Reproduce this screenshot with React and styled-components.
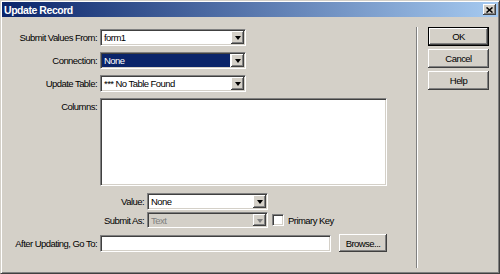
import React from "react";
import styled, { createGlobalStyle, css } from "styled-components";

const GlobalStyle = createGlobalStyle`
  html, body {
    margin: 0;
    padding: 0;
    width: 500px;
    height: 274px;
    overflow: hidden;
    background: #d4d0c8;
  }
  * {
    box-sizing: border-box;
  }
`;

const FONT = `"Liberation Sans", Arial, sans-serif`;

const sunken = css`
  border: 1px solid;
  border-color: #808080 #ffffff #ffffff #808080;
  box-shadow: inset 1px 1px #404040, inset -1px -1px #d4d0c8;
`;

const raised = css`
  box-shadow: inset -1px -1px #404040, inset 1px 1px #ffffff,
    inset -2px -2px #808080, inset 2px 2px #d4d0c8;
`;

const Window = styled.div`
  width: 500px;
  height: 274px;
  display: flex;
  flex-direction: column;
  background: #d4d0c8;
  border: 1px solid;
  border-color: #d4d0c8 #404040 #404040 #d4d0c8;
  box-shadow: inset 1px 1px #ffffff, inset -1px -1px #808080;
  padding: 1px;
  font-family: ${FONT};
  font-size: 9.5px;
  letter-spacing: -0.55px;
  color: #000;
`;

const TitleBar = styled.div`
  height: 15px;
  flex: none;
  display: flex;
  align-items: center;
  justify-content: space-between;
  padding: 0 2px 0 2px;
  background: linear-gradient(to right, #0a246a, #a6caf0);
`;

const Title = styled.span`
  color: #fff;
  font-weight: bold;
  font-size: 10.5px;
  letter-spacing: -0.45px;
`;

const CloseButton = styled.div`
  width: 13px;
  height: 11px;
  background: #d4d0c8;
  display: flex;
  align-items: center;
  justify-content: center;
  ${raised};
`;

const Body = styled.div`
  flex: 1;
  display: flex;
`;

const Form = styled.div`
  width: 414px;
  display: flex;
  flex-direction: column;
  padding-top: 12px;
`;

const Row = styled.div`
  display: flex;
  align-items: ${(p) => (p.$top ? "flex-start" : "center")};
  gap: 3px;
  margin-top: ${(p) => p.$mt || 0}px;
`;

const Label = styled.div`
  width: ${(p) => p.$w || 95}px;
  text-align: right;
  white-space: nowrap;
  flex: none;
  padding-top: ${(p) => (p.$top ? 3 : 0)}px;
`;

const Field = styled.div`
  ${sunken};
  width: ${(p) => p.$w}px;
  height: ${(p) => p.$h || 17}px;
  background: ${(p) => (p.$disabled ? "#d4d0c8" : "#fff")};
  display: flex;
  align-items: stretch;
  padding: 1px;
  flex: none;
`;

const FieldText = styled.div`
  flex: 1;
  display: flex;
  align-items: center;
  padding-left: 2px;
  white-space: nowrap;
  overflow: hidden;
  margin-right: 1px;
  background: ${(p) => (p.$selected ? "#0a246a" : "transparent")};
  color: ${(p) => (p.$selected ? "#fff" : p.$disabled ? "#808080" : "#000")};
`;

const DropButton = styled.div`
  width: 13px;
  flex: none;
  background: #d4d0c8;
  display: flex;
  align-items: center;
  justify-content: center;
  ${raised};
`;

const Arrow = styled.div`
  width: 0;
  height: 0;
  border-left: 3.5px solid transparent;
  border-right: 3.5px solid transparent;
  border-top: 4px solid ${(p) => (p.$disabled ? "#808080" : "#000")};
  margin-top: 1px;
`;

const ListBox = styled.div`
  ${sunken};
  width: 287px;
  height: 88px;
  background: #fff;
`;

const CheckBox = styled.div`
  ${sunken};
  width: 12px;
  height: 12px;
  background: #fff;
  margin-left: 1px;
  flex: none;
`;

const CheckLabel = styled.span`
  margin-left: 1px;
`;

const Separator = styled.div`
  width: 2px;
  flex: none;
  border-left: 1px solid #808080;
  border-right: 1px solid #ffffff;
  margin: 10px 0 4px;
`;

const ButtonColumn = styled.div`
  display: flex;
  flex-direction: column;
  gap: 3px;
  padding: 10px 0 0 10px;
`;

const Button = styled.div`
  width: ${(p) => p.$w || 61}px;
  height: ${(p) => p.$h || 19}px;
  margin-left: ${(p) => p.$ml || 0}px;
  flex: none;
  display: flex;
  align-items: center;
  justify-content: center;
  background: #d4d0c8;
  ${(p) =>
    p.$default
      ? css`
          box-shadow: inset 0 0 0 1px #000, inset -2px -2px #404040,
            inset 2px 2px #ffffff, inset -3px -3px #808080;
        `
      : raised};
`;

function Select({ value, width, selected, disabled, height }) {
  return (
    <Field $w={width} $h={height} $disabled={disabled}>
      <FieldText $selected={selected} $disabled={disabled}>
        {value}
      </FieldText>
      <DropButton>
        <Arrow $disabled={disabled} />
      </DropButton>
    </Field>
  );
}

export default function App() {
  return (
    <>
      <GlobalStyle />
      <Window>
        <TitleBar>
          <Title>Update Record</Title>
          <CloseButton>
            <svg width="7" height="6" viewBox="0 0 7 6">
              <path d="M0.5 0.5 L6.5 5.5 M6.5 0.5 L0.5 5.5" stroke="#000" strokeWidth="1.6" />
            </svg>
          </CloseButton>
        </TitleBar>
        <Body>
          <Form>
            <Row>
              <Label>Submit Values From:</Label>
              <Select value="form1" width={146} />
            </Row>
            <Row $mt={6}>
              <Label>Connection:</Label>
              <Select value="None" width={146} selected />
            </Row>
            <Row $mt={6}>
              <Label>Update Table:</Label>
              <Select value="*** No Table Found" width={146} />
            </Row>
            <Row $mt={6} $top>
              <Label $top>Columns:</Label>
              <ListBox />
            </Row>
            <Row $mt={7}>
              <Label $w={142}>Value:</Label>
              <Select value="None" width={121} />
            </Row>
            <Row $mt={2}>
              <Label $w={142}>Submit As:</Label>
              <Select value="Text" width={121} height={16} disabled />
              <CheckBox />
              <CheckLabel>Primary Key</CheckLabel>
            </Row>
            <Row $mt={6}>
              <Label>After Updating, Go To:</Label>
              <Field $w={231} />
              <Button $w={48} $h={18} $ml={5}>
                Browse...
              </Button>
            </Row>
          </Form>
          <Separator />
          <ButtonColumn>
            <Button $default>OK</Button>
            <Button>Cancel</Button>
            <Button>Help</Button>
          </ButtonColumn>
        </Body>
      </Window>
    </>
  );
}
